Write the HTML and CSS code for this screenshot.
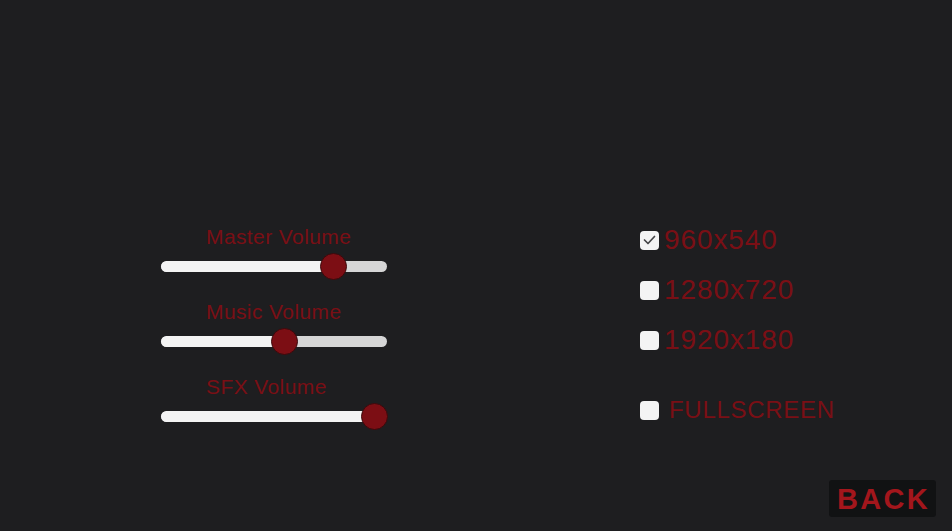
FILE: index.html
```html
<!DOCTYPE html>
<html>
<head>
<meta charset="utf-8">
<link rel="stylesheet" href="styles.css">
</head>
<body>
<div class="screen">
  <div class="content">
    <div class="sliders">
      <div class="group">
        <div class="label">Master Volume</div>
        <div class="slider">
          <div class="track"><div class="fill" style="width:172px"></div></div>
          <div class="handle" style="left:159px"></div>
        </div>
      </div>
      <div class="group">
        <div class="label">Music Volume</div>
        <div class="slider">
          <div class="track"><div class="fill" style="width:123px"></div></div>
          <div class="handle" style="left:110px"></div>
        </div>
      </div>
      <div class="group">
        <div class="label">SFX Volume</div>
        <div class="slider">
          <div class="track"><div class="fill" style="width:226px"></div></div>
          <div class="handle" style="left:200px"></div>
        </div>
      </div>
    </div>
    <div class="options">
      <div class="row">
        <span class="box checked"><svg viewBox="0 0 19 19" width="19" height="19"><polyline points="4.5,9 8,12.5 14.5,5.5" fill="none" stroke="#444446" stroke-width="1.7" stroke-linecap="round" stroke-linejoin="round"/></svg></span>
        <span class="res">960x540</span>
      </div>
      <div class="row">
        <span class="box"></span>
        <span class="res">1280x720</span>
      </div>
      <div class="row">
        <span class="box"></span>
        <span class="res">1920x180</span>
      </div>
      <div class="row full">
        <span class="box"></span>
        <span class="fs">FULLSCREEN</span>
      </div>
    </div>
  </div>
  <div class="footer">
    <div class="back">BACK</div>
  </div>
</div>
</body>
</html>
```
FILE: styles.css
```css
* { box-sizing: border-box; }
html, body {
  margin: 0;
  padding: 0;
  background: #1e1e20;
  font-family: "Liberation Sans", Arial, sans-serif;
}
.screen {
  width: 952px;
  height: 531px;
  display: flex;
  flex-direction: column;
  overflow: hidden;
}
.content {
  flex: 1;
  display: flex;
  padding-left: 161px;
}
.sliders {
  width: 227px;
  padding-top: 223px;
  display: flex;
  flex-direction: column;
  gap: 18px;
}
.group {
  display: flex;
  flex-direction: column;
}
.label {
  font-size: 21px;
  line-height: 24px;
  height: 24px;
  margin-top: 2px;
  color: #7a0f15;
  padding-left: 45px;
  letter-spacing: 0.4px;
}
.slider {
  position: relative;
  margin-top: 4px;
  height: 27px;
  width: 227px;
  display: flex;
  align-items: center;
}
.track {
  width: 226px;
  height: 11px;
  border-radius: 6px;
  background: #d6d6d6;
  overflow: hidden;
}
.fill {
  height: 100%;
  background: #f4f4f4;
  border-radius: 6px 0 0 6px;
}
.handle {
  position: absolute;
  top: 0;
  width: 27px;
  height: 27px;
  border-radius: 50%;
  background: #7c0e14;
  border: 1px solid #3c0a0c;
}
.options {
  margin-left: 252px;
  padding-top: 215px;
  display: flex;
  flex-direction: column;
}
.row {
  height: 50px;
  display: flex;
  align-items: center;
}
.row.full {
  margin-top: 20px;
}
.box {
  width: 19px;
  height: 19px;
  border-radius: 4px;
  background: #f4f4f4;
  display: flex;
}
.res {
  margin-left: 5px;
  font-size: 28px;
  letter-spacing: 0.9px;
  color: #7a0f15;
  line-height: 32px;
}
.fs {
  margin-left: 10px;
  font-size: 24px;
  letter-spacing: 0.7px;
  color: #7a0f15;
  line-height: 28px;
}
.footer {
  display: flex;
  justify-content: flex-end;
  padding: 0 16px 14px 0;
}
.back {
  width: 107px;
  height: 37px;
  background: #111213;
  border-radius: 3px;
  color: #a3161c;
  font-weight: bold;
  font-size: 29px;
  letter-spacing: 2.3px;
  display: flex;
  align-items: center;
  justify-content: center;
  padding-left: 2px;
  padding-top: 1px;
}
```
